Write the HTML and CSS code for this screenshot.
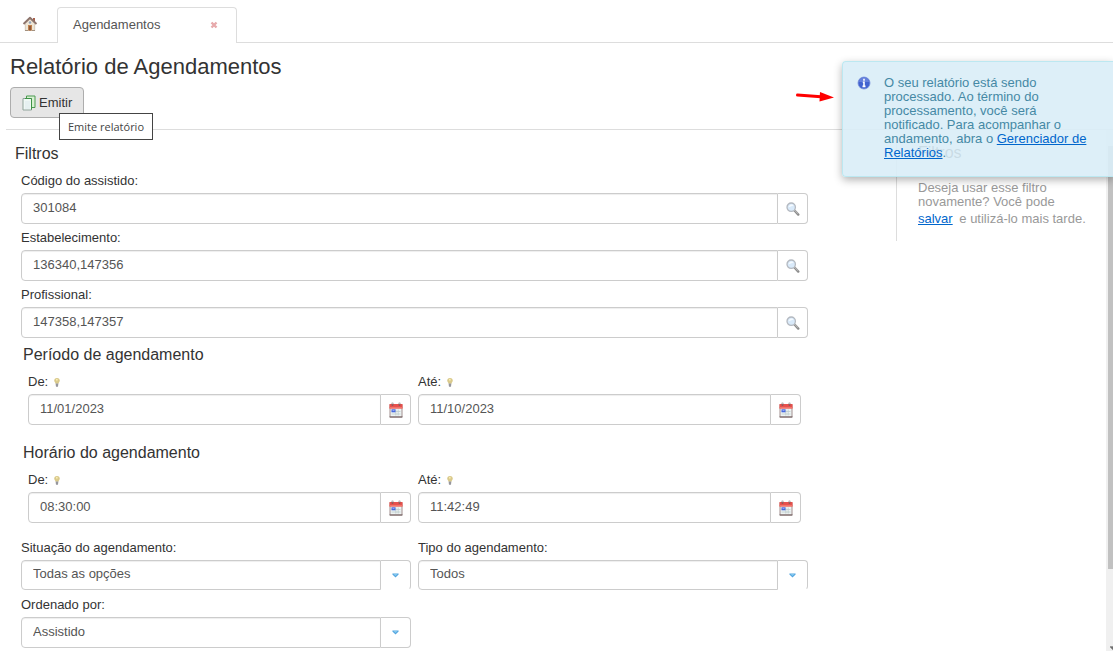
FILE: index.html
```
<!DOCTYPE html>
<html lang="pt-BR">
<head>
<meta charset="utf-8">
<title>Relatório de Agendamentos</title>
<link rel="stylesheet" href="styles.css">
</head>
<body>
<svg class="sprite" aria-hidden="true">
  <symbol id="search" viewBox="0 0 14 14">
    <path d="M8.5 8.5L12.3 12.6" stroke="#8c8c8c" stroke-width="2.4" stroke-linecap="round"/>
    <path d="M8.4 8L12 11.8" stroke="#c2c2c2" stroke-width="1"/>
    <circle cx="5.2" cy="5.2" r="4.2" fill="#d9eafa" stroke="#b4b9c0" stroke-width="1.3"/>
    <path d="M2.6 5.2a2.8 2.8 0 0 1 5-1.6z" fill="#f6fbff"/>
  </symbol>
  <symbol id="calendar" viewBox="0 0 14 16">
    <path d="M1 2.5h12v12.5H1z" fill="#eef3f3" stroke="#a08e8e"/>
    <path d="M.5 2h13v4.5H.5z" fill="#e8504c"/>
    <path d="M.5 5h13v1.5H.5z" fill="#f0746b"/>
    <path d="M3.5 .8v3M10.5 .8v3" stroke="#7d5555" stroke-width="1.6"/>
    <path d="M3.5 .8v1.4M10.5 .8v1.4" stroke="#d8d8d8" stroke-width=".8"/>
    <path d="M2.5 9.5h9M2.5 12h9M6.8 7.5v6M9.2 7.5v6" stroke="#bccccc" stroke-width=".8"/>
    <path d="M2.5 7.3h4v3h-4z" fill="#4264dd"/>
    <path d="M3.5 8.6h2" stroke="#b8c8ff" stroke-width=".7"/>
    <path d="M.5 15h13" stroke="#6e5b5b"/>
  </symbol>
  <symbol id="bulb" viewBox="0 0 6 9">
    <path d="M3 0C1.200 0 .1 1.200.2 2.700c.1 1.300 1.300 1.800 1.400 3h2.800c.1-1.200 1.300-1.700 1.400-3C5.900 1.200 4.800 0 3 0z" fill="#d9c98b"/>
    <path d="M2 1.500c.5-.6 1.300-.6 1.700 0L3 3.500z" fill="#fff3b8"/>
    <path d="M1.600 5.500h2.800L4 8.700H2z" fill="#96969c"/>
  </symbol>
  <symbol id="arrow" viewBox="0 0 7 5">
    <path d="M.4.5h6.2v1L3.5 4.6.4 1.5z" fill="#53a5df"/>
    <path d="M1.500 1.300h4L3.500 2.800z" fill="#93d5f4"/>
  </symbol>
</svg>

<nav class="tabs">
  <a class="tab-home" href="#" aria-label="Início">
    <svg width="16" height="16" viewBox="0 0 16 16">
      <path d="M11 2h2v4h-2z" fill="#a8604c"/>
      <path d="M3.300 7.500L8 3l4.700 4.500V14.500H3.300z" fill="#efe6d6" stroke="#c9bba8" stroke-width=".7"/>
      <path d="M1.500 8L8 1.800 14.500 8" fill="none" stroke="#8d746c" stroke-width="1.900" stroke-linejoin="round"/>
      <path d="M6 9h4v5.500H6z" fill="#c0824f"/>
      <path d="M7.300 10h1.400v4.500H7.300z" fill="#7d4830"/>
      <circle cx="8" cy="6.500" r="1.200" fill="#93a5bb"/>
      <path d="M3 14.500h3M10 14.500h3" stroke="#a3917f"/>
    </svg>
  </a>
  <div class="tab">
    <a class="tab-name" href="#">Agendamentos</a>
    <button class="tab-close" type="button" aria-label="Fechar">
      <svg width="8" height="8" viewBox="0 0 8 8"><path d="M1.500 1.500l5 5M6.500 1.500l-5 5" stroke="#e7a9ab" stroke-width="2.400"/></svg>
    </button>
  </div>
</nav>

<header class="top">
  <h1>Relatório de Agendamentos</h1>
  <div class="toolbar">
    <button class="emit" type="button">
      <svg width="14" height="16" viewBox="0 0 14 16">
        <path d="M4.500 1h8.500v11.500H4.500z" fill="#d8f0d2" stroke="#4b9a50"/>
        <path d="M1 3.500h8.500V15H1z" fill="#f0f8f5" stroke="#90a39b"/>
        <path d="M3 3.500h6.500V14.500" fill="none" stroke="#3d9345"/>
        <path d="M3 7h5M3 9h5M3 11h5M3 13h5" stroke="#dce9ed"/>
      </svg>
      Emitir
    </button>
    <span class="tooltip" role="tooltip">Emite relatório</span>
  </div>
</header>

<div class="body">
  <main class="main">
    <h2>Filtros</h2>
    <form class="form">
      <div class="field">
        <label for="codigo">Código do assistido:</label>
        <div class="control"><input id="codigo" type="text" value="301084"><button type="button" aria-label="Pesquisar assistido"><svg width="14" height="14"><use href="#search"/></svg></button></div>
      </div>
      <div class="field">
        <label for="estab">Estabelecimento:</label>
        <div class="control"><input id="estab" type="text" value="136340,147356"><button type="button" aria-label="Pesquisar estabelecimento"><svg width="14" height="14"><use href="#search"/></svg></button></div>
      </div>
      <div class="field">
        <label for="prof">Profissional:</label>
        <div class="control"><input id="prof" type="text" value="147358,147357"><button type="button" aria-label="Pesquisar profissional"><svg width="14" height="14"><use href="#search"/></svg></button></div>
      </div>

      <section class="group">
        <h3>Período de agendamento</h3>
        <div class="pair inset">
          <div class="field">
            <label for="data-de">De: <svg class="hint" width="6" height="9"><use href="#bulb"/></svg></label>
            <div class="control"><input id="data-de" type="text" value="11/01/2023"><button type="button" aria-label="Escolher data inicial"><svg width="14" height="16"><use href="#calendar"/></svg></button></div>
          </div>
          <div class="field">
            <label for="data-ate">Até: <svg class="hint" width="6" height="9"><use href="#bulb"/></svg></label>
            <div class="control"><input id="data-ate" type="text" value="11/10/2023"><button type="button" aria-label="Escolher data final"><svg width="14" height="16"><use href="#calendar"/></svg></button></div>
          </div>
        </div>
      </section>

      <section class="group">
        <h3>Horário do agendamento</h3>
        <div class="pair inset">
          <div class="field">
            <label for="hora-de">De: <svg class="hint" width="6" height="9"><use href="#bulb"/></svg></label>
            <div class="control"><input id="hora-de" type="text" value="08:30:00"><button type="button" aria-label="Escolher hora inicial"><svg width="14" height="16"><use href="#calendar"/></svg></button></div>
          </div>
          <div class="field">
            <label for="hora-ate">Até: <svg class="hint" width="6" height="9"><use href="#bulb"/></svg></label>
            <div class="control"><input id="hora-ate" type="text" value="11:42:49"><button type="button" aria-label="Escolher hora final"><svg width="14" height="16"><use href="#calendar"/></svg></button></div>
          </div>
        </div>
      </section>

      <div class="pair">
        <div class="field">
          <label for="situacao">Situação do agendamento:</label>
          <div class="control open"><select id="situacao"><option>Todas as opções</option></select><button type="button" aria-label="Abrir situações"><svg width="7" height="5"><use href="#arrow"/></svg></button></div>
        </div>
        <div class="field">
          <label for="tipo">Tipo do agendamento:</label>
          <div class="control open"><select id="tipo"><option>Todos</option></select><button type="button" aria-label="Abrir tipos"><svg width="7" height="5"><use href="#arrow"/></svg></button></div>
        </div>
        <div class="field">
          <label for="ordem">Ordenado por:</label>
          <div class="control"><select id="ordem"><option>Assistido</option></select><button type="button" aria-label="Abrir ordenação"><svg width="7" height="5"><use href="#arrow"/></svg></button></div>
        </div>
      </div>
    </form>
  </main>

  <aside class="aside">
    <h2>Filtros</h2>
    <p>Deseja usar esse filtro novamente? Você pode</p>
    <p class="save"><a href="#">salvar</a> e utilizá-lo mais tarde.</p>
  </aside>

  <div class="scroll" aria-hidden="true">
    <div class="thumb"></div>
    <svg class="scroll-end" width="4" height="4" viewBox="0 0 4 4"><path d="M1 1h3M2 2h2M3 3h1" stroke="#444"/></svg>
  </div>
</div>

<svg class="pointer" width="38" height="12" viewBox="0 0 38 12" aria-hidden="true">
  <path d="M1.500 4L25 5.800" stroke="#f00" stroke-width="3" stroke-linecap="round"/>
  <path d="M24 1l14 5.500L23.500 10.500z" fill="#f00"/>
</svg>

<div class="notice" role="status">
  <svg class="info" width="14" height="14" viewBox="0 0 14 14">
    <circle cx="7" cy="7" r="6" fill="#4263d0" stroke="#7890da" stroke-width=".8"/>
    <path d="M2 6a5 4.500 0 0 1 10 0z" fill="#6580dc"/>
    <path d="M7 2.800v2M5.800 6.200H7v4M5.500 10.400h3" fill="none" stroke="#fff" stroke-width="1.600"/>
  </svg>
  <p>O seu relatório está sendo processado. Ao término do processamento, você será notificado. Para acompanhar o andamento, abra o <a href="#">Gerenciador de Relatórios</a>.</p>
</div>
</body>
</html>
```
FILE: styles.css
```
* { box-sizing: border-box; }

body {
  margin: 0;
  min-height: 100vh;
  display: flex;
  flex-direction: column;
  position: relative;
  overflow: hidden;
  background: #fff;
  color: #333;
  font: 13px/14px "Liberation Sans", Arial, sans-serif;
}

h1, h2, h3, p { margin: 0; font-weight: normal; }
h1 { font-size: 22px; line-height: 26px; }
h2, h3 { font-size: 16px; line-height: 20px; }
a { color: #06c; }
svg { display: block; flex: none; }
button { padding: 0; font: inherit; cursor: pointer; }
.sprite { position: absolute; width: 0; height: 0; }

.tabs {
  display: flex;
  align-items: flex-end;
  height: 43px;
  border-bottom: 1px solid #ddd;
}
.tab-home {
  display: flex;
  justify-content: center;
  width: 57px;
  padding: 0 0 10px 3px;
}
.tab {
  display: flex;
  align-items: center;
  justify-content: space-between;
  width: 180px;
  height: 36px;
  margin-bottom: -1px;
  padding: 0 18px 2px 15px;
  border: 1px solid #ddd;
  border-bottom: 0;
  border-radius: 4px 4px 0 0;
  background: #fff;
}
.tab-name { color: #555; text-decoration: none; }
.tab-close { border: 0; background: none; }

.top {
  margin-left: 6px;
  padding: 11px 4px 11px;
  border-bottom: 1px solid #ddd;
}
.toolbar { position: relative; margin-top: 7px; }
.emit {
  display: flex;
  align-items: center;
  gap: 3px;
  height: 31px;
  padding: 0 11px;
  border: 1px solid #adadad;
  border-radius: 4px;
  background: #e6e6e6;
  color: #333;
}
.tooltip {
  position: absolute;
  top: 26px;
  left: 49px;
  padding: 4px 8px;
  border: 1px solid #444;
  background: #fff;
  color: #444;
  font: 11px/17px "Open Sans", sans-serif;
  white-space: nowrap;
}

.body { display: flex; flex: 1; }
.main { flex: 1; padding: 14px 88px 3px 15px; }
.form { padding: 3px 0 0 6px; }
.field label {
  display: flex;
  align-items: center;
  gap: 6px;
  height: 26px;
  padding-top: 2px;
}
.control { display: flex; height: 31px; }
.control input,
.control select {
  flex: 1;
  min-width: 0;
  padding: 0 11px 2px;
  border: 1px solid #ccc;
  border-radius: 4px 0 0 4px;
  background: #fff;
  box-shadow: inset 0 1px 1px #eee;
  color: #555;
  font: inherit;
  appearance: none;
}
.control button {
  display: flex;
  align-items: center;
  justify-content: center;
  width: 30px;
  border: 1px solid #ccc;
  border-left: 0;
  border-radius: 0 4px 4px 0;
  background: #fff;
}
.control.open { height: 30px; margin-bottom: 1px; }
.control.open button { border-bottom-color: transparent; }

.group { padding-bottom: 11px; }
.group h3 { padding: 7px 2px 3px; }
.pair { display: grid; grid-template-columns: 1fr 1fr; column-gap: 7px; }
.inset { padding: 0 7px; }

.aside {
  align-self: flex-start;
  width: 210px;
  margin-top: 11px;
  padding: 2px 22px 15px 21px;
  border-left: 1px solid #ddd;
  color: #999;
}
.aside h2 { margin-bottom: 18px; color: #333; }
.save { padding-top: 3px; white-space: nowrap; }
.save a { margin-right: 3px; }

.scroll {
  display: flex;
  flex-direction: column;
  align-items: flex-end;
  justify-content: space-between;
  width: 7px;
  padding: 16px 0 1px;
  background: #f0f0f0;
}
.thumb { width: 5px; height: 84%; background: #c1c1c1; }

.pointer { position: absolute; top: 91px; right: 279px; }
.notice {
  position: absolute;
  top: 61px;
  right: 0;
  display: flex;
  gap: 13px;
  width: 271px;
  padding: 14px 20px 16px 14px;
  border: 1px solid #bce8f1;
  border-right: 0;
  border-radius: 4px 0 0 4px;
  background: rgba(217, 237, 247, .9);
  box-shadow: 0 3px 8px rgba(0, 0, 0, .3);
  color: #4589a5;
}
```
